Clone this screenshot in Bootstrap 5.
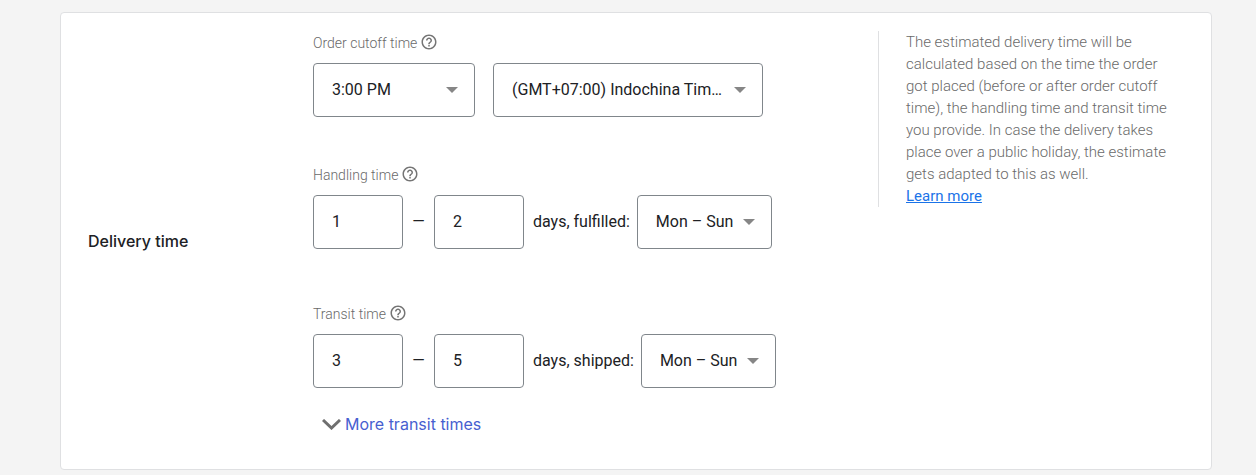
<!DOCTYPE html>
<html lang="en">
<head>
<meta charset="utf-8">
<meta name="viewport" content="width=device-width, initial-scale=1">
<title>Delivery time</title>
<link href="https://cdn.jsdelivr.net/npm/bootstrap@5.3.0/dist/css/bootstrap.min.css" rel="stylesheet">
<style>
  body { background: #f4f4f4; color: #202124; font-family: Roboto, "Liberation Sans", sans-serif; font-size: 16px; line-height: 24px; }
  .page { padding: 12px 44px 5px 60px; }
  .panel { border: 1px solid #dfe0e2; border-radius: 4px; padding: 18px 27px 33px; }
  .panel-title { flex: 0 0 225px; padding-top: 14px; font-family: Inter, sans-serif; font-size: 16px; font-weight: 500; line-height: 24px; }
  .settings { flex: 0 0 565px; }
  .settings fieldset { margin-bottom: 46px; }
  .settings fieldset:nth-of-type(2) { margin-bottom: 53px; }
  .settings fieldset:last-of-type { margin-bottom: 24px; }
  .caption { height: 24px; margin-bottom: 8px; gap: 3px; color: #6a6a6a; font-size: 14px; font-weight: 300; }
  .help { color: #757575; line-height: 0; margin-bottom: 2px; }
  .box.form-control, .box.form-select { height: 54px; border: 1px solid #80868b; border-radius: 4px; padding: 0 18px 1px; color: #202124; font-size: 16px; line-height: 24px; }
  .box.form-select { background-image: url("data:image/svg+xml,%3Csvg xmlns='http://www.w3.org/2000/svg' viewBox='0 0 12 6'%3E%3Cpath d='M0 0h12L6 6z' fill='%23868686'/%3E%3C/svg%3E"); background-size: 12px 6px; background-position: right 16px center; padding: 0 34px 0 18px; }
  .selects { gap: 18px; }
  .w-num { width: 90px; }
  .w-time { width: 162px; }
  .w-zone { width: 270px; }
  .w-days { width: 135px; }
  .dash { width: 31px; text-align: center; }
  .unit { margin: 0 7px 0 9px; }
  .more { margin-left: 9px; color: #4760d0; font-family: Inter, sans-serif; font-size: 16px; line-height: 24px; }
  .note { border-left: 1px solid #dfe0e2; padding: 0 16px 0 27px; color: #6a6a6a; font-size: 15px; font-weight: 300; line-height: 22px; }
  .note a { color: #1a73e8; font-weight: 400; }
</style>
</head>
<body>
<main class="page">
  <form class="panel bg-white d-flex align-items-start">
    <h2 class="panel-title align-self-center mb-0">Delivery time</h2>
    <div class="settings">
      <fieldset>
        <div class="caption d-flex align-items-center">
          <label for="cutoff">Order cutoff time</label>
          <button type="button" class="help btn p-0 border-0" aria-label="About order cutoff time"><svg width="18" height="18" viewBox="0 0 24 24" fill="currentColor"><path d="M11 18h2v-2h-2v2zm1-16C6.480 2 2 6.480 2 12s4.480 10 10 10 10-4.480 10-10S17.520 2 12 2zm0 18c-4.410 0-8-3.590-8-8s3.590-8 8-8 8 3.590 8 8-3.590 8-8 8zm0-14c-2.210 0-4 1.790-4 4h2c0-1.100.9-2 2-2s2 .9 2 2c0 2-3 1.750-3 5h2c0-2.250 3-2.500 3-5 0-2.210-1.790-4-4-4z"/></svg></button>
        </div>
        <div class="selects d-flex">
          <select id="cutoff" class="box form-select w-time"><option>3:00 PM</option></select>
          <select class="box form-select w-zone" aria-label="Time zone"><option>(GMT+07:00) Indochina Tim…</option></select>
        </div>
      </fieldset>
      <fieldset>
        <div class="caption d-flex align-items-center">
          <label for="handling">Handling time</label>
          <button type="button" class="help btn p-0 border-0" aria-label="About handling time"><svg width="18" height="18" viewBox="0 0 24 24" fill="currentColor"><path d="M11 18h2v-2h-2v2zm1-16C6.480 2 2 6.480 2 12s4.480 10 10 10 10-4.480 10-10S17.520 2 12 2zm0 18c-4.410 0-8-3.590-8-8s3.590-8 8-8 8 3.590 8 8-3.590 8-8 8zm0-14c-2.210 0-4 1.790-4 4h2c0-1.100.9-2 2-2s2 .9 2 2c0 2-3 1.750-3 5h2c0-2.250 3-2.500 3-5 0-2.210-1.790-4-4-4z"/></svg></button>
        </div>
        <div class="d-flex align-items-center">
          <input id="handling" class="box form-control w-num" type="text" value="1">
          <span class="dash">—</span>
          <input class="box form-control w-num" type="text" value="2" aria-label="Maximum handling days">
          <label class="unit" for="handling-days">days, fulfilled:</label>
          <select id="handling-days" class="box form-select w-days"><option>Mon – Sun</option></select>
        </div>
      </fieldset>
      <fieldset>
        <div class="caption d-flex align-items-center">
          <label for="transit">Transit time</label>
          <button type="button" class="help btn p-0 border-0" aria-label="About transit time"><svg width="18" height="18" viewBox="0 0 24 24" fill="currentColor"><path d="M11 18h2v-2h-2v2zm1-16C6.480 2 2 6.480 2 12s4.480 10 10 10 10-4.480 10-10S17.520 2 12 2zm0 18c-4.410 0-8-3.590-8-8s3.590-8 8-8 8 3.590 8 8-3.590 8-8 8zm0-14c-2.210 0-4 1.790-4 4h2c0-1.100.9-2 2-2s2 .9 2 2c0 2-3 1.750-3 5h2c0-2.250 3-2.500 3-5 0-2.210-1.790-4-4-4z"/></svg></button>
        </div>
        <div class="d-flex align-items-center">
          <input id="transit" class="box form-control w-num" type="text" value="3">
          <span class="dash">—</span>
          <input class="box form-control w-num" type="text" value="5" aria-label="Maximum transit days">
          <label class="unit" for="transit-days">days, shipped:</label>
          <select id="transit-days" class="box form-select w-days"><option>Mon – Sun</option></select>
        </div>
      </fieldset>
      <button type="button" class="more btn border-0 p-0 d-flex align-items-center gap-1"><svg width="19" height="11" viewBox="0 0 19 11" fill="none" stroke="#6f6f6f" stroke-width="3"><path d="M1 1l8.500 8 8.500-8"/></svg>More transit times</button>
    </div>
    <aside class="note flex-fill">
      The estimated delivery time will be calculated based on the time the order got placed (before or after order cutoff time), the handling time and transit time you provide. In case the delivery takes place over a public holiday, the estimate gets adapted to this as well.<br>
      <a href="#">Learn more</a>
    </aside>
  </form>
</main>
<script src="https://cdn.jsdelivr.net/npm/bootstrap@5.3.0/dist/js/bootstrap.bundle.min.js"></script>
</body>
</html>
